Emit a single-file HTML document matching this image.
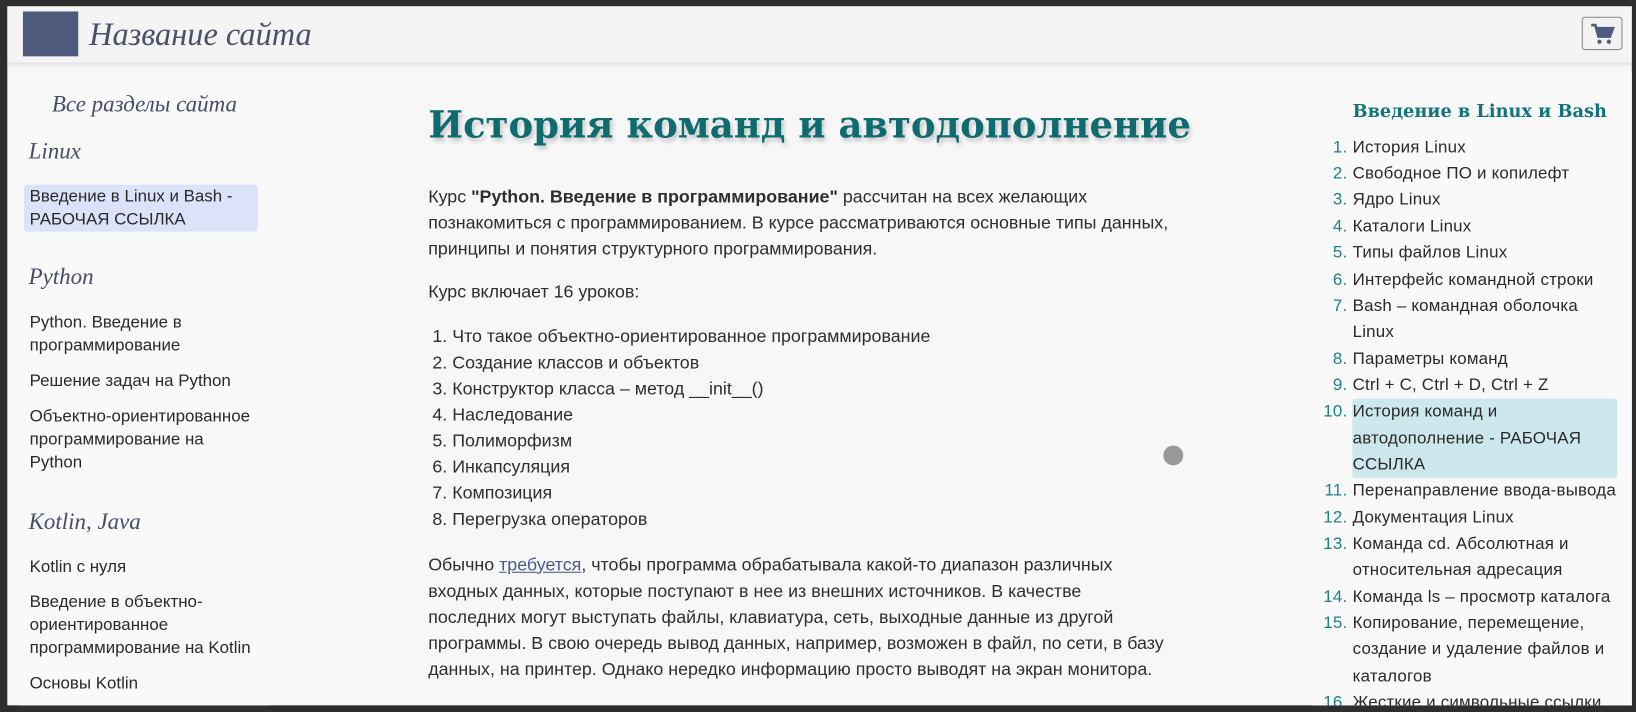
<!DOCTYPE html>
<html><head><meta charset="utf-8"><style>
*{margin:0;padding:0;box-sizing:border-box}
body{width:1636px;height:712px;background:#2e2e2e;position:relative;overflow:hidden;font-family:"Liberation Sans","DejaVu Sans",sans-serif;color:#2a2a2a}
#w{position:absolute;left:0;top:0;width:1568px;height:682px;transform:scale(1.04337);transform-origin:0 0}
#in{position:absolute;left:7.4px;top:5.8px;width:1556.6px;height:670.2px;background:#f7f7f7;overflow:hidden}
.a{position:absolute;white-space:nowrap}
#hdr{position:absolute;left:0;top:0;width:1557px;height:54px;background:#f4f4f4;box-shadow:0 2px 4px rgba(0,0,0,.12)}
.side{position:absolute;background:#f9f9f9}
.serif{font-family:"DejaVu Serif","Liberation Serif",serif}
.it{font-family:"Liberation Serif","DejaVu Serif",serif;font-style:italic;color:#454e68}
.l{font-size:16.2px;line-height:22px;color:#2a2a2a}
.m{font-size:17.1px;line-height:25px;color:#2e2e2e}
.r{font-size:16.2px;line-height:25.35px;color:#2a2a2a;letter-spacing:.2px}
.n{color:#1e7f86;text-align:right;width:40px}
</style></head><body><div id="w"><div id="in">
<div id="hdr"></div>
<div class="a" style="left:15px;top:5px;width:53px;height:43px;background:#4f5b7c"></div>
<div class="a it" style="left:78px;top:8px;font-size:31px;line-height:38px;color:#4a5068">Название сайта</div>
<div class="a" style="left:1509px;top:10px;width:39px;height:32px;border:1px solid #888;border-radius:3px;background:#f2f2f2">
<svg width="37" height="30" viewBox="0 0 37 30"><path d="M8 7h4l3 11h11l3-8H13" fill="none" stroke="#4f5b7c" stroke-width="2.5"/><path d="M13 9h16l-3 8H15z" fill="#4f5b7c"/><circle cx="16" cy="23" r="2" fill="#4f5b7c"/><circle cx="25" cy="23" r="2" fill="#4f5b7c"/></svg></div>

<div class="side" style="left:11px;top:62px;width:240px;height:620px"></div>
<div class="side" style="left:1251px;top:62px;width:364px;height:620px"></div>

<div class="a it" style="left:11px;width:240px;text-align:center;top:81px;font-size:22px;line-height:26px">Все разделы сайта</div>
<div class="a it" style="left:20px;top:126px;font-size:22px;line-height:26px">Linux</div>
<div class="a" style="left:16px;top:171px;width:224px;height:45px;background:#dbe3fb;border-radius:3px"></div>
<div class="a l" style="left:21px;top:171px">Введение в Linux и Bash -<br>РАБОЧАЯ ССЫЛКА</div>
<div class="a it" style="left:20px;top:246px;font-size:22px;line-height:26px">Python</div>
<div class="a l" style="left:21px;top:292px">Python. Введение в<br>программирование</div>
<div class="a l" style="left:21px;top:348px">Решение задач на Python</div>
<div class="a l" style="left:21px;top:382px">Объектно-ориентированное<br>программирование на<br>Python</div>
<div class="a it" style="left:20px;top:481px;font-size:22px;line-height:26px">Kotlin, Java</div>
<div class="a l" style="left:21px;top:526px">Kotlin с нуля</div>
<div class="a l" style="left:21px;top:560px">Введение в объектно-<br>ориентированное<br>программирование на Kotlin</div>
<div class="a l" style="left:21px;top:638px">Основы Kotlin</div>

<div class="a serif" style="left:403px;top:90px;font-size:35.4px;line-height:50px;font-weight:bold;color:#0e6b70;text-shadow:2px 3px 4px rgba(0,0,0,.2)">История команд и автодополнение</div>
<div class="a m" style="left:403px;top:170px">Курс <b>"Python. Введение в программирование"</b> рассчитан на всех желающих<br>познакомиться с программированием. В курсе рассматриваются основные типы данных,<br>принципы и понятия структурного программирования.</div>
<div class="a m" style="left:403px;top:261px">Курс включает 16 уроков:</div>
<div class="a m" style="left:407px;top:304px">1. Что такое объектно-ориентированное программирование<br>2. Создание классов и объектов<br>3. Конструктор класса – метод __init__()<br>4. Наследование<br>5. Полиморфизм<br>6. Инкапсуляция<br>7. Композиция<br>8. Перегрузка операторов</div>
<div class="a m" style="left:403px;top:523px">Обычно <span style="color:#4a5a88;text-decoration:underline">требуется</span>, чтобы программа обрабатывала какой-то диапазон различных<br>входных данных, которые поступают в нее из внешних источников. В качестве<br>последних могут выступать файлы, клавиатура, сеть, выходные данные из другой<br>программы. В свою очередь вывод данных, например, возможен в файл, по сети, в базу<br>данных, на принтер. Однако нередко информацию просто выводят на экран монитора.</div>
<div class="a" style="left:1108px;top:421px;width:19px;height:19px;border-radius:50%;background:#999"></div>

<div class="a serif" style="left:1289px;top:88px;font-size:17px;line-height:26px;font-weight:bold;color:#11747a">Введение в Linux и Bash</div>
<div class="a" style="left:1289px;top:376px;width:254px;height:76px;background:#cde8ec;border-radius:3px"></div>
<div class="a r n" style="left:1244px;top:123px">1.<br>2.<br>3.<br>4.<br>5.<br>6.<br>7.<br><br>8.<br>9.<br>10.<br><br><br>11.<br>12.<br>13.<br><br>14.<br>15.<br><br><br>16.</div>
<div class="a r" style="left:1289px;top:123px">История Linux<br>Свободное ПО и копилефт<br>Ядро Linux<br>Каталоги Linux<br>Типы файлов Linux<br>Интерфейс командной строки<br>Bash – командная оболочка<br>Linux<br>Параметры команд<br>Ctrl + C, Ctrl + D, Ctrl + Z<br>История команд и<br>автодополнение - РАБОЧАЯ<br>ССЫЛКА<br>Перенаправление ввода-вывода<br>Документация Linux<br>Команда cd. Абсолютная и<br>относительная адресация<br>Команда ls – просмотр каталога<br>Копирование, перемещение,<br>создание и удаление файлов и<br>каталогов<br>Жесткие и символьные ссылки</div>
</div></div></body></html>
